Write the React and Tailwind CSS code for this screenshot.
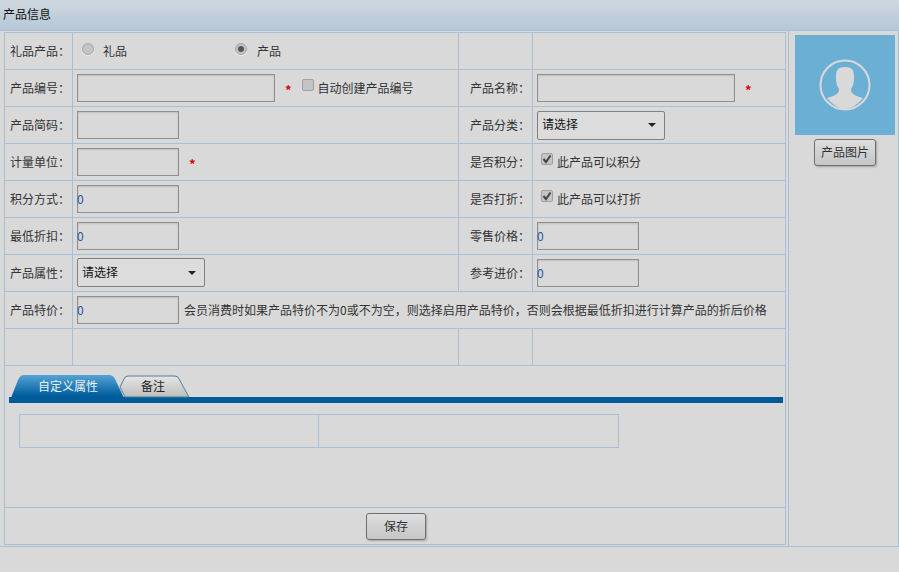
const font = { fontFamily: '"Noto Sans CJK SC", sans-serif' };

function Label({ children }) {
  return <td className="w-[68px] pl-[5px] text-[12px] text-[#333] border border-[#a9bfd5] whitespace-nowrap">{children}</td>;
}

function Cell({ children, colSpan, className = '' }) {
  return <td colSpan={colSpan} className={`border border-[#a9bfd5] text-[12px] text-[#333] ${className}`}>{children}</td>;
}

function Input({ wide, value }) {
  return (
    <div className={`${wide ? 'w-[198px]' : 'w-[102px]'} h-[28px] shrink-0 border border-[#8f8f8f] shadow-[inset_0_1px_2px_rgba(0,0,0,0.12)] flex items-center text-[12px] text-[#1f5596]`}>
      <span className="-ml-px">{value}</span>
    </div>
  );
}

function Star() {
  return <span className="text-[#e00000] text-[13px] font-bold ml-[10px] mt-[3px] leading-none">*</span>;
}

function Select({ className = '' }) {
  return (
    <div className={`w-[128px] h-[29px] border border-[#808080] rounded-[2px] flex items-center justify-between pl-[4px] pr-[8px] text-[12px] text-[#111] bg-[#dcdcdc] ${className}`}>
      <span className="-mt-[2px]">请选择</span>
      <span className="w-0 h-0 border-x-[4px] border-x-transparent border-t-[4px] border-t-[#222]"></span>
    </div>
  );
}

function Radio({ on }) {
  return (
    <span className="w-[12px] h-[12px] -mt-[4px] rounded-full border border-[#a3a3a3] bg-[#c4c4c4] shadow-[0_1px_1px_rgba(255,255,255,0.6)] flex items-center justify-center">
      {on && <span className="w-[6px] h-[6px] rounded-full bg-[#555]"></span>}
    </span>
  );
}

function Check({ on }) {
  return (
    <span className="w-[12px] h-[12px] -mt-[7px] shrink-0 rounded-[2px] border border-[#a0a0a0] bg-[#c4c4c4] flex items-center justify-center">
      {on && <svg width="10" height="10" viewBox="0 0 10 10"><path d="M1.5 5 L4 8 L8.5 1.5" fill="none" stroke="#444" strokeWidth="2" /></svg>}
    </span>
  );
}

function Btn({ children, w }) {
  return (
    <button className={`${w} h-[27px] rounded-[3px] border border-[#6f6f6f] bg-gradient-to-b from-[#dedede] to-[#c4c6c8] shadow-[1px_1px_2px_rgba(0,0,0,0.25)] text-[12px] text-[#333]`}>
      {children}
    </button>
  );
}

function Row({ children }) {
  return <tr className="h-[37px]">{children}</tr>;
}

export default function App() {
  return (
    <div className="w-[899px] h-[572px] bg-[#d9d9d9] overflow-hidden" style={font}>
      <div className="h-[31px] bg-gradient-to-b from-[#cfd8df] to-[#b5c7d8] border-b border-[#a9bfd5] pl-[3px] pt-[6px] text-[12px] leading-[16px] text-[#111]">产品信息</div>

      <div className="flex h-[516px] border-b border-[#a9bfd5]">
        <div className="w-[788px] pl-[4px] pr-[3px] pt-[1px]">
          <table className="w-[781px] table-fixed border-collapse">
            <colgroup>
              <col className="w-[68px]" />
              <col className="w-[386px]" />
              <col className="w-[74px]" />
              <col className="w-[253px]" />
            </colgroup>
            <tbody>
              <Row>
                <Label>礼品产品：</Label>
                <Cell>
                  <div className="flex items-center">
                    <div className="flex items-center w-[162px] pl-[9px]"><Radio /><span className="ml-[9px]">礼品</span></div>
                    <Radio on /><span className="ml-[10px]">产品</span>
                  </div>
                </Cell>
                <Cell />
                <Cell />
              </Row>
              <Row>
                <Label>产品编号：</Label>
                <Cell>
                  <div className="flex items-center pl-[4px]">
                    <Input wide /><Star />
                    <span className="ml-[10px] mr-[4px] flex"><Check /></span><span>自动创建产品编号</span>
                  </div>
                </Cell>
                <Label><span className="pl-[6px]">产品名称：</span></Label>
                <Cell><div className="flex items-center pl-[4px]"><Input wide /><Star /></div></Cell>
              </Row>
              <Row>
                <Label>产品简码：</Label>
                <Cell><div className="pl-[4px]"><Input /></div></Cell>
                <Label><span className="pl-[6px]">产品分类：</span></Label>
                <Cell><div className="pl-[4px]"><Select /></div></Cell>
              </Row>
              <Row>
                <Label>计量单位：</Label>
                <Cell><div className="flex items-center pl-[4px]"><Input /><Star /></div></Cell>
                <Label><span className="pl-[6px]">是否积分：</span></Label>
                <Cell><div className="flex items-center pl-[8px] gap-[4px]"><Check on /><span>此产品可以积分</span></div></Cell>
              </Row>
              <Row>
                <Label>积分方式：</Label>
                <Cell><div className="pl-[4px]"><Input value="0" /></div></Cell>
                <Label><span className="pl-[6px]">是否打折：</span></Label>
                <Cell><div className="flex items-center pl-[8px] gap-[4px]"><Check on /><span>此产品可以打折</span></div></Cell>
              </Row>
              <Row>
                <Label>最低折扣：</Label>
                <Cell><div className="pl-[4px]"><Input value="0" /></div></Cell>
                <Label><span className="pl-[6px]">零售价格：</span></Label>
                <Cell><div className="pl-[4px]"><Input value="0" /></div></Cell>
              </Row>
              <Row>
                <Label>产品属性：</Label>
                <Cell><div className="pl-[4px]"><Select className="-mt-px" /></div></Cell>
                <Label><span className="pl-[6px]">参考进价：</span></Label>
                <Cell><div className="pl-[4px]"><Input value="0" /></div></Cell>
              </Row>
              <Row>
                <Label>产品特价：</Label>
                <Cell colSpan={3}>
                  <div className="flex items-center pl-[4px]">
                    <Input value="0" />
                    <span className="ml-[5px] whitespace-nowrap">会员消费时如果产品特价不为0或不为空，则选择启用产品特价，否则会根据最低折扣进行计算产品的折后价格</span>
                  </div>
                </Cell>
              </Row>
              <Row>
                <Cell /><Cell /><Cell /><Cell />
              </Row>
              <tr className="h-[142px]">
                <Cell colSpan={4} className="align-top">
                  <div className="pl-[4px] pt-[9px]">
                    <div className="relative h-[28px] w-[774px] border-b-[6px] border-[#005a98]">
                      <svg className="absolute left-0 top-0" width="190" height="28" viewBox="0 0 190 28">
                        <defs>
                          <linearGradient id="tabOn" x1="0" y1="0" x2="0" y2="1">
                            <stop offset="0" stopColor="#55a3d6" />
                            <stop offset="0.75" stopColor="#005c9c" />
                            <stop offset="1" stopColor="#005a98" />
                          </linearGradient>
                          <linearGradient id="tabOff" x1="0" y1="0" x2="0" y2="1">
                            <stop offset="0" stopColor="#e6e6e6" />
                            <stop offset="1" stopColor="#bdbdbd" />
                          </linearGradient>
                        </defs>
                        <path d="M111 12 L115 4 Q116 1 119 1 L166 1 Q169 1 170 4 L180 22 L116 22 Z" fill="url(#tabOff)" stroke="#4d7f96" />
                        <path d="M0 28 L9 5 Q11 0 15 0 L100 0 Q104 0 106 4 L114 21 L118 28 Z" fill="url(#tabOn)" />
                      </svg>
                      <span className="absolute left-[29px] top-[2px] text-[#e8f2f8]">自定义属性</span>
                      <span className="absolute left-[132px] top-[2px] text-[#222]">备注</span>
                    </div>
                    <div className="ml-[10px] mt-[11px] w-[600px] h-[34px] flex border border-[#a9bfd5]">
                      <div className="w-[299px] border-r border-[#a9bfd5]"></div>
                    </div>
                  </div>
                </Cell>
              </tr>
              <Row>
                <Cell colSpan={4}>
                  <div className="flex justify-center pl-[2px]"><Btn w="w-[60px]">保存</Btn></div>
                </Cell>
              </Row>
            </tbody>
          </table>
        </div>
        <div className="flex-1 border-l border-r border-[#a9bfd5] pt-[4px] pl-[3px] flex flex-col items-center">
          <div className="w-[100px] h-[100px] bg-[#6cafd4] flex items-center justify-center">
            <svg width="52" height="52" viewBox="0 0 52 52">
              <circle cx="26" cy="26" r="24.5" fill="none" stroke="#d9d9d9" strokeWidth="2" />
              <path d="M26 8 C18 8 17 12 17 18 C17 24 18 27 20 30 C20 34 18 36 8 39 C14 46 20 50 26 50 C32 50 38 46 44 39 C34 36 32 34 32 30 C34 27 35 24 35 18 C35 12 34 8 26 8 Z" fill="#d9d9d9" />
            </svg>
          </div>
          <div className="mt-[3px]"><Btn w="w-[62px]">产品图片</Btn></div>
        </div>
      </div>
    </div>
  );
}
